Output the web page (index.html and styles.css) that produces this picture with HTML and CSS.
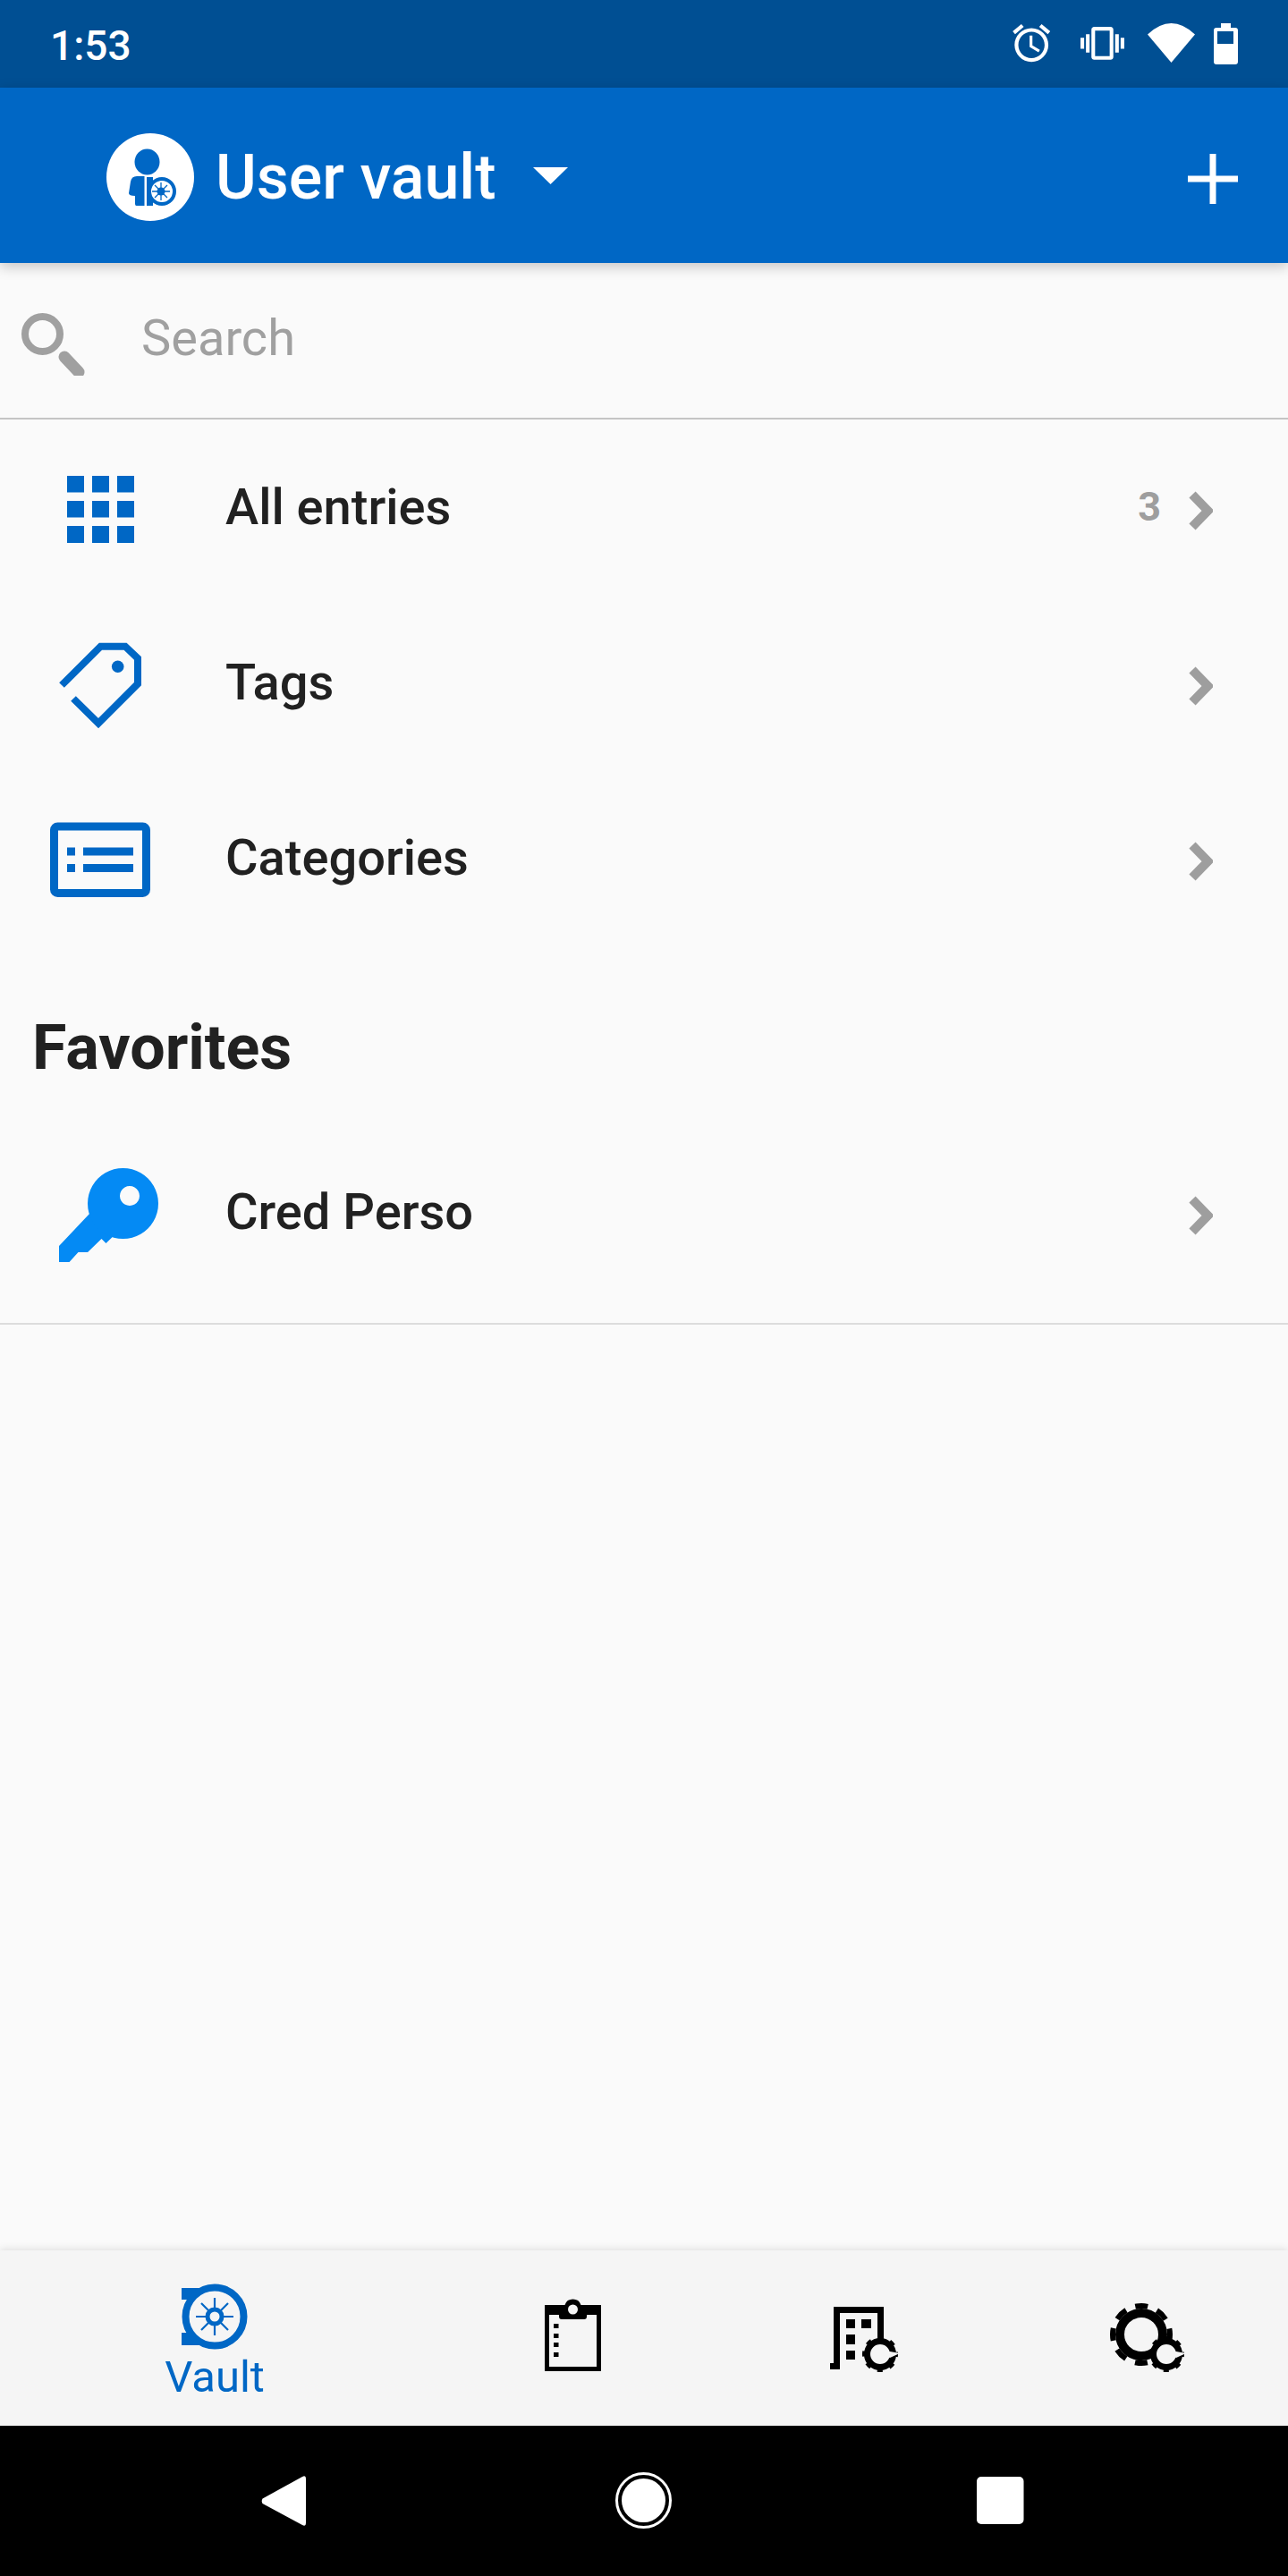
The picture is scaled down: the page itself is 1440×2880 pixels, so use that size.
FILE: index.html
```html
<!DOCTYPE html>
<html lang="en">
<head>
<meta charset="utf-8">
<title>User vault</title>
<link rel="stylesheet" href="styles.css">
</head>
<body>
<div class="screen">
  <div class="status">
    <span class="time">1:53</span>
    <svg class="status-icons" viewBox="1128 0 256 98" width="256" height="98">
      <g transform="translate(1128 23) scale(2.1)" fill="#fff"><path d="M22 5.72l-4.6-3.86-1.29 1.53 4.6 3.86L22 5.72zM7.88 3.39L6.6 1.86 2 5.71l1.29 1.53 4.59-3.85zM12.5 8H11v6l4.75 2.85.75-1.23-4-2.37V8zM12 4c-4.97 0-9 4.03-9 9s4.03 9 9 9 9-4.03 9-9-4.03-9-9-9zm0 16c-3.87 0-7-3.13-7-7s3.13-7 7-7 7 3.13 7 7-3.13 7-7 7z"/></g>
      <g transform="translate(1208 24) scale(2.04)" fill="#fff"><path d="M0 15h2V9H0v6zm3 2h2V7H3v10zm19-8v6h2V9h-2zm-3 8h2V7h-2v10zM16.5 3h-9C6.67 3 6 3.67 6 4.5v15c0 .83.67 1.5 1.5 1.5h9c.83 0 1.5-.67 1.5-1.5v-15c0-.83-.67-1.5-1.5-1.5zM16 19H8V5h8v14z"/></g>
      <path d="M1283 38.500Q1309.500 13.500 1336 38.500L1309.500 70Z" fill="#fff"/>
      <path fill="#fff" fill-rule="evenodd" d="M1365 26h11v5h5q3 0 3 3v35q0 3-3 3h-21q-3 0-3-3V34q0-3 3-3h5zM1361 35v14h18V35z"/>
    </svg>
  </div>

  <header class="appbar">
    <svg class="avatar" viewBox="119 149 98 98" width="98" height="98">
      <circle cx="168" cy="198" r="49" fill="#fff"/>
      <ellipse cx="164.500" cy="181" rx="14" ry="14.500" fill="#0067c5"/>
      <path d="M161.500 197v33h-9q-1.500 0-1.500-2v-9q-7 0-7-3l2-13q1-6 7-6z" fill="#0067c5"/>
      <path d="M164 198h7v32h-7z" fill="#0067c5"/>
      <circle cx="181" cy="214" r="14" fill="#fff" stroke="#0067c5" stroke-width="4"/>
      <circle cx="180" cy="214" r="4.500" fill="#0067c5"/>
      <path d="M180 204v20M170 214h20M173 207l14 14M187 207l-14 14" stroke="#0067c5" stroke-width="1.300"/>
    </svg>
    <h1 class="vault-title">User vault</h1>
    <svg class="caret" viewBox="0 0 39 19" width="39" height="19"><path d="M0 0h39L19.500 19z" fill="#fff"/></svg>
    <svg class="plus" viewBox="0 0 56 56" width="56" height="56"><path d="M24.500 0h7v24.500H56v7H31.500V56h-7V31.500H0v-7h24.500z" fill="#fff"/></svg>
  </header>

  <div class="search">
    <svg class="search-icon" viewBox="24 347 72 70" width="72" height="70">
      <circle cx="47.500" cy="370.500" r="19.500" fill="none" stroke="#a0a0a0" stroke-width="8"/>
      <path d="M72 396l16 17" stroke="#a0a0a0" stroke-width="13" stroke-linecap="round"/>
    </svg>
    <span class="search-text">Search</span>
  </div>

  <section class="list">
    <div class="row">
      <svg class="row-icon" viewBox="0 469 252 196" width="252" height="196">
        <path fill="#0067c5" d="M75 532h19v18.500H75zM103 532h19v18.500h-19zM131 532h19v18.500h-19zM75 560h19v18.500H75zM103 560h19v18.500h-19zM131 560h19v18.500h-19zM75 588h19v19H75zM103 588h19v19h-19zM131 588h19v19h-19z"/>
      </svg>
      <span class="row-label">All entries</span>
      <span class="count">3</span>
      <svg class="chev" viewBox="0 0 27 44" width="27" height="44"><path d="M4 4l17.500 18L4 40" fill="none" stroke="#9e9e9e" stroke-width="10"/></svg>
    </div>
    <div class="row">
      <svg class="row-icon" viewBox="0 665 252 196" width="252" height="196">
        <path d="M69 766L112.500 722.700H140L154 736V764.500L110 808.500L82 781" fill="none" stroke="#0067c5" stroke-width="8"/>
        <circle cx="131.700" cy="745.200" r="6.800" fill="#0067c5"/>
      </svg>
      <span class="row-label">Tags</span>
      <svg class="chev" viewBox="0 0 27 44" width="27" height="44"><path d="M4 4l17.500 18L4 40" fill="none" stroke="#9e9e9e" stroke-width="10"/></svg>
    </div>
    <div class="row">
      <svg class="row-icon" viewBox="0 861 252 196" width="252" height="196">
        <rect x="60.500" y="924" width="103" height="74.500" rx="4" fill="none" stroke="#0067c5" stroke-width="9"/>
        <path d="M75 947.500h9v9h-9zM93 947.500h56v9H93zM75 966h9v9h-9zM93 966h56v9H93z" fill="#0067c5"/>
      </svg>
      <span class="row-label">Categories</span>
      <svg class="chev" viewBox="0 0 27 44" width="27" height="44"><path d="M4 4l17.500 18L4 40" fill="none" stroke="#9e9e9e" stroke-width="10"/></svg>
    </div>
  </section>

  <h2 class="fav-title">Favorites</h2>

  <section class="fav-list">
    <div class="row">
      <svg class="row-icon" viewBox="0 1257 252 196" width="252" height="196">
        <path d="M100 1357L66 1393V1411H77.500L87.500 1400H98L113.500 1385L118.500 1390L125.700 1383L137 1370Z" fill="#048af4"/>
        <path fill="#048af4" fill-rule="evenodd" d="M137.500 1306a39.500 39.500 0 1 0 .01 0zM145 1326a11 11 0 1 1-.01 0z"/>
      </svg>
      <span class="row-label">Cred Perso</span>
      <svg class="chev" viewBox="0 0 27 44" width="27" height="44"><path d="M4 4l17.500 18L4 40" fill="none" stroke="#9e9e9e" stroke-width="10"/></svg>
    </div>
  </section>

  <div class="spacer"></div>

  <nav class="tabs">
    <div class="tab tab-active">
      <svg class="tab-vault" viewBox="160 2540 160 90" width="160" height="90">
        <path d="M203 2558h22v13h-22zM203 2608h22v14h-22z" fill="#0067c5"/>
        <circle cx="240" cy="2590" r="32.500" fill="#f5f5f5" stroke="#0067c5" stroke-width="8"/>
        <circle cx="240" cy="2590" r="8" fill="none" stroke="#0067c5" stroke-width="5"/>
        <path d="M240 2569v11M240 2600v11M219 2590h11M250 2590h11M225 2575l8 8M255 2575l-8 8M225 2605l8-8M255 2605l-8-8" stroke="#0067c5" stroke-width="2.200"/>
      </svg>
      <span class="tab-label">Vault</span>
    </div>
    <div class="tab">
      <svg class="tab-icon" viewBox="560 2516 160 196" width="160" height="196">
        <path d="M609 2577h22.500a9.500 9.500 0 0 1 18 0H672v74h-63zM614 2588v58h53v-58h-11v2q0 3-3 3h-25q-3 0-3-3v-2z" fill="#000" fill-rule="evenodd"/>
        <circle cx="640.500" cy="2582" r="5.500" fill="#f5f5f5"/>
        <path d="M619 2598h5.500v5H619zM619 2609h5.500v5H619zM619 2619h5.500v5H619zM619 2630h5.500v5H619z" fill="#000"/>
      </svg>
    </div>
    <div class="tab">
      <svg class="tab-icon" viewBox="880 2516 160 196" width="160" height="196">
        <path d="M932 2579h56v38h-7v-31h-42v63h-11v-7h4z" fill="#000"/>
        <path d="M946 2593h10v10h-10zM963 2593h11v10h-11zM946 2610h10v11h-10zM946 2628h10v10h-10z" fill="#000"/>
        <circle cx="984" cy="2632" r="14.500" fill="#f5f5f5" stroke="#000" stroke-width="7"/>
        <circle cx="984" cy="2632" r="18" fill="none" stroke="#000" stroke-width="4" stroke-dasharray="6 8.140" stroke-dashoffset="3"/>
        <path d="M984 2632l11-3 11 2-11 5z" fill="#f5f5f5"/>
      </svg>
    </div>
    <div class="tab">
      <svg class="tab-icon" viewBox="1200 2516 160 196" width="160" height="196">
        <circle cx="1276" cy="2610" r="24" fill="none" stroke="#000" stroke-width="10"/>
        <circle cx="1276" cy="2610" r="32" fill="none" stroke="#000" stroke-width="6" stroke-dasharray="14 11.130" stroke-dashoffset="7"/>
        <circle cx="1304" cy="2632" r="14.500" fill="#f5f5f5" stroke="#000" stroke-width="7"/>
        <circle cx="1304" cy="2632" r="18" fill="none" stroke="#000" stroke-width="4" stroke-dasharray="6 8.140" stroke-dashoffset="3"/>
        <path d="M1304 2632l11-3 11 2-11 5z" fill="#f5f5f5"/>
      </svg>
    </div>
  </nav>

  <div class="sysnav">
    <svg class="sys-btn" viewBox="268 2712 100 168" width="100" height="168"><path d="M293.500 2793.500L338 2769q4-2 4 2v50q0 4-4 2L293.500 2799q-1.500-3 0-5.500z" fill="#fff"/></svg>
    <svg class="sys-btn" viewBox="670 2712 100 168" width="100" height="168">
      <circle cx="719.500" cy="2795.500" r="30" fill="none" stroke="#fff" stroke-width="3"/>
      <circle cx="719.500" cy="2795.500" r="24.500" fill="#fff"/>
    </svg>
    <svg class="sys-btn" viewBox="1068 2712 100 168" width="100" height="168"><rect x="1092" y="2769" width="52.500" height="53" rx="5" fill="#fff"/></svg>
  </div>
</div>
</body>
</html>
```

FILE: styles.css
```css
* { box-sizing: border-box; }
html, body { margin: 0; padding: 0; }
body { background: #fafafa; font-family: Roboto, "Liberation Sans", sans-serif; color: #212121; }
svg { display: block; flex: none; }

.screen { width: 1440px; height: 2880px; display: flex; flex-direction: column; overflow: hidden; }

.status { height: 98px; flex: none; background: #004f93; display: flex; align-items: center; justify-content: space-between; padding: 0 56px; }
.time { color: #fff; font-size: 46px; font-weight: 500; line-height: 98px; margin-top: 3px; }

.appbar { height: 196px; flex: none; background: #0067c5; display: flex; align-items: center; padding: 0 56px 0 119px; box-shadow: 0 4px 14px rgba(0,0,0,.22); position: relative; }
.avatar { margin-top: 4px; }
.vault-title { margin: 4px 0 0 24px; font-size: 70px; font-weight: 500; line-height: 80px; color: #fff; }
.caret { margin: 0 0 0 41px; }
.plus { margin: 8px 0 0 auto; }

.search { height: 175px; flex: none; display: flex; align-items: center; padding-left: 24px; border-bottom: 2px solid #c4c4c4; }
.search-icon { margin-top: 8px; }
.search-text { margin: 0 0 6px 62px; font-size: 56px; color: #a0a0a0; line-height: 64px; }

.row { height: 196px; display: flex; align-items: center; padding-right: 84px; }
.row-label { font-size: 56px; font-weight: 500; line-height: 64px; color: #212121; flex: 1; }
.count { font-size: 45px; font-weight: 700; color: #9e9e9e; margin: -2px 31px 0 0; }
.chev { margin-top: 8px; }

.fav-title { margin: 0; height: 200px; padding: 86px 0 0 36px; font-size: 70px; font-weight: 700; line-height: 56px; color: #212121; flex: none; }

.fav-list { flex: none; border-bottom: 2px solid #dcdcdc; padding-bottom: 26px; }

.spacer { flex: 1; }

.tabs { height: 196px; flex: none; background: #f5f5f5; display: grid; grid-template-columns: 400px 320px 320px 160px; padding-left: 160px; box-shadow: 0 -2px 8px rgba(0,0,0,.1); position: relative; }
.tab { width: 160px; display: flex; flex-direction: column; align-items: center; }
.tab-vault { margin-top: 24px; }
.tab-label { font-size: 49px; line-height: 56px; color: #0067c5; }

.sysnav { height: 168px; flex: none; background: #000; display: grid; grid-template-columns: 402px 398px 100px; padding-left: 268px; }
```
